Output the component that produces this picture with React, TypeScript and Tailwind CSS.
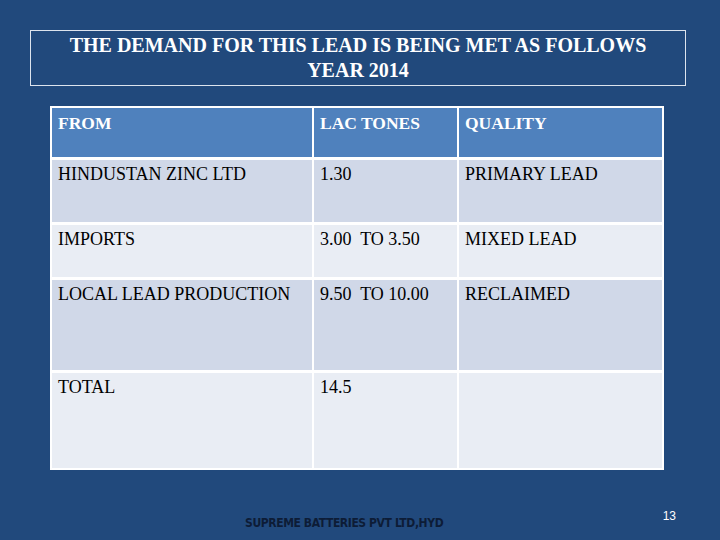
import React from "react";

const serif = { fontFamily: '"Liberation Serif", "Times New Roman", serif' };

const rows: { a: string; b: string; c: string; h: string; bg: string }[] = [
  { a: "HINDUSTAN ZINC LTD", b: "1.30", c: "PRIMARY LEAD", h: "h-[62px]", bg: "bg-[#d0d8e8]" },
  { a: "IMPORTS", b: "3.00  TO 3.50", c: "MIXED LEAD", h: "h-[52px]", bg: "bg-[#e9edf4]" },
  { a: "LOCAL LEAD PRODUCTION", b: "9.50  TO 10.00", c: "RECLAIMED", h: "h-[90px]", bg: "bg-[#d0d8e8]" },
  { a: "TOTAL", b: "14.5", c: "", h: "h-[95px]", bg: "bg-[#e9edf4]" },
];

export default function App() {
  return (
    <div className="w-[720px] h-[540px] bg-[#21497c] flex flex-col overflow-hidden" style={serif}>
      <div className="mt-[30px] ml-[30px] w-[656px] h-[56px] border border-[#dde4ee] flex flex-col items-center pt-[2px] text-white font-bold text-[20px] leading-[25px]">
        <div>THE DEMAND FOR THIS LEAD IS BEING MET AS FOLLOWS</div>
        <div>YEAR 2014</div>
      </div>
      <div className="mt-[20px] ml-[50px] w-[614px] bg-white p-[2px] flex flex-col gap-[3px]">
        <div className="grid grid-cols-[260px_143px_1fr] gap-[2px] h-[49px]">
          <div className="bg-[#4f81bd] text-white font-bold text-[17.5px] pl-[6px] pt-[5px] leading-[20px]">FROM</div>
          <div className="bg-[#4f81bd] text-white font-bold text-[17.5px] pl-[6px] pt-[5px] leading-[20px]">LAC TONES</div>
          <div className="bg-[#4f81bd] text-white font-bold text-[17.5px] pl-[6px] pt-[5px] leading-[20px]">QUALITY</div>
        </div>
        {rows.map((r) => (
          <div key={r.a} className={`grid grid-cols-[260px_143px_1fr] gap-[2px] ${r.h}`}>
            <div className={`${r.bg} text-black text-[18px] pl-[6px] pt-[4px] leading-[20px] whitespace-pre`}>{r.a}</div>
            <div className={`${r.bg} text-black text-[18px] pl-[6px] pt-[4px] leading-[20px] whitespace-pre`}>{r.b}</div>
            <div className={`${r.bg} text-black text-[18px] pl-[6px] pt-[4px] leading-[20px] whitespace-pre`}>{r.c}</div>
          </div>
        ))}
      </div>
      <div className="flex items-start mt-[39px]">
        <div
          className="ml-[245px] mt-[6px] text-[#0d1c36] font-bold text-[12px] leading-[16px] tracking-[-0.4px]"
          style={{ fontFamily: '"DejaVu Sans Condensed", "Liberation Sans", sans-serif' }}
        >
          SUPREME BATTERIES PVT LTD,HYD
        </div>
        <div
          className="ml-auto mr-[44px] -mt-[1px] text-white text-[12px] leading-[16px]"
          style={{ fontFamily: '"Liberation Sans", sans-serif' }}
        >
          13
        </div>
      </div>
    </div>
  );
}
